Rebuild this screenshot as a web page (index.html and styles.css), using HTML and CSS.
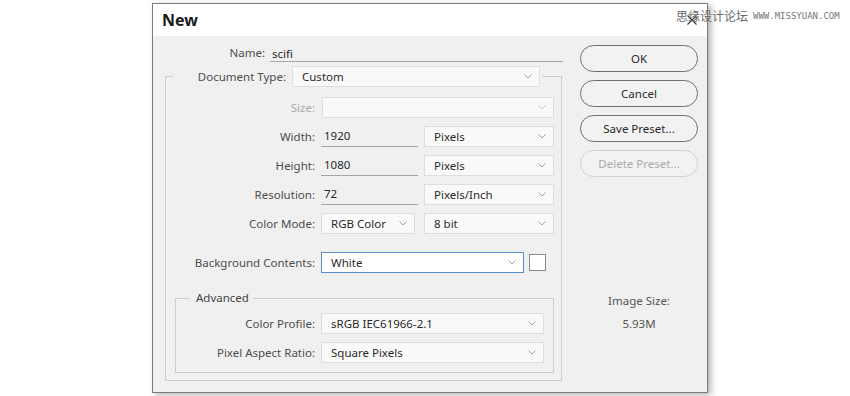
FILE: index.html
```html
<!DOCTYPE html>
<html lang="en">
  <head>
    <meta charset="UTF-8" />
    <meta name="viewport" content="width=device-width, initial-scale=1.0" />
    <title>New</title>
    <link rel="stylesheet" href="styles.css">
  </head>
  <body>
    <div class="page">
      <div class="dialog">
        <div class="titlebar">
          <span class="title">New</span>
          <svg class="close" width="10" height="10" viewBox="0 0 10 10">
            <path d="M0.5 0.5 L9.5 9.5 M9.5 0.5 L0.5 9.5" stroke="#333" stroke-width="1.1" fill="none" />
          </svg>
        </div>

        <div class="content">
          <div class="main">
            <div class="name-row">
              <span class="label name-label">Name:</span>
              <span class="name-input">scifi</span>
            </div>

            <fieldset class="group">
              <legend class="group-head">
                <span class="label doc-label">Document Type:</span>
                <div class="select doc-select">
                  <span>Custom</span>
                  <svg class="chev" width="8" height="5" viewBox="0 0 8 5"><polyline points="0.5,0.5 4,4 7.5,0.5" /></svg>
                </div>
              </legend>

              <div class="row">
                <span class="label disabled">Size:</span>
                <div class="select wide blank">
                  <span></span>
                  <svg class="chev" width="8" height="5" viewBox="0 0 8 5"><polyline points="0.5,0.5 4,4 7.5,0.5" /></svg>
                </div>
              </div>
              <div class="row">
                <span class="label">Width:</span>
                <span class="field">1920</span>
                <div class="select unit">
                  <span>Pixels</span>
                  <svg class="chev" width="8" height="5" viewBox="0 0 8 5"><polyline points="0.5,0.5 4,4 7.5,0.5" /></svg>
                </div>
              </div>
              <div class="row">
                <span class="label">Height:</span>
                <span class="field">1080</span>
                <div class="select unit">
                  <span>Pixels</span>
                  <svg class="chev" width="8" height="5" viewBox="0 0 8 5"><polyline points="0.5,0.5 4,4 7.5,0.5" /></svg>
                </div>
              </div>
              <div class="row">
                <span class="label">Resolution:</span>
                <span class="field">72</span>
                <div class="select unit">
                  <span>Pixels/Inch</span>
                  <svg class="chev" width="8" height="5" viewBox="0 0 8 5"><polyline points="0.5,0.5 4,4 7.5,0.5" /></svg>
                </div>
              </div>
              <div class="row">
                <span class="label">Color Mode:</span>
                <div class="select mode">
                  <span>RGB Color</span>
                  <svg class="chev" width="8" height="5" viewBox="0 0 8 5"><polyline points="0.5,0.5 4,4 7.5,0.5" /></svg>
                </div>
                <div class="select unit">
                  <span>8 bit</span>
                  <svg class="chev" width="8" height="5" viewBox="0 0 8 5"><polyline points="0.5,0.5 4,4 7.5,0.5" /></svg>
                </div>
              </div>

              <div class="row bg-row">
                <span class="label">Background Contents:</span>
                <div class="select bg-select">
                  <span>White</span>
                  <svg class="chev" width="8" height="5" viewBox="0 0 8 5"><polyline points="0.5,0.5 4,4 7.5,0.5" /></svg>
                </div>
                <span class="swatch"></span>
              </div>

              <fieldset class="advanced">
                <legend class="adv-head">Advanced</legend>
                <div class="row">
                  <span class="label adv-label">Color Profile:</span>
                  <div class="select profile">
                    <span>sRGB IEC61966-2.1</span>
                    <svg class="chev" width="8" height="5" viewBox="0 0 8 5"><polyline points="0.5,0.5 4,4 7.5,0.5" /></svg>
                  </div>
                </div>
                <div class="row">
                  <span class="label adv-label">Pixel Aspect Ratio:</span>
                  <div class="select profile">
                    <span>Square Pixels</span>
                    <svg class="chev" width="8" height="5" viewBox="0 0 8 5"><polyline points="0.5,0.5 4,4 7.5,0.5" /></svg>
                  </div>
                </div>
              </fieldset>
            </fieldset>
          </div>

          <div class="side">
            <div class="btn">OK</div>
            <div class="btn">Cancel</div>
            <div class="btn">Save Preset...</div>
            <div class="btn off">Delete Preset...</div>
            <div class="image-size">
              <div>Image Size:</div>
              <div class="size-value">5.93M</div>
            </div>
          </div>
        </div>
      </div>

      <div class="watermark">
        <span class="wm-cn">思缘设计论坛</span>
        <span class="wm-url">WWW.MISSYUAN.COM</span>
      </div>
    </div>
  </body>
</html>
```

FILE: styles.css
```css
body,
html {
  margin: 0;
  background-color: #fff;
  font-family: "Noto Sans", "Open Sans", sans-serif;
  font-size: 11.5px;
  color: #333;
}

.page {
  position: relative;
  height: 396px;
  box-sizing: border-box;
  padding: 3px 0 0 152px;
}

.dialog {
  width: 556px;
  height: 390px;
  box-sizing: border-box;
  border: 1px solid #7b7b7b;
  background-color: #f0f0f0;
  box-shadow: 3px 2px 6px rgba(0, 0, 0, 0.3);
  display: flex;
  flex-direction: column;
}

.titlebar {
  height: 32px;
  flex-shrink: 0;
  background-color: #fff;
  display: flex;
  align-items: center;
  justify-content: space-between;
  padding: 0 10px 0 9px;
}

.title {
  font-weight: bold;
  font-size: 16px;
  color: #1b1b1b;
}

.content {
  display: flex;
  padding: 8px 0 0 12px;
}

.main {
  width: 400px;
}

.label {
  line-height: 21px;
  text-align: right;
  color: #4d4d4d;
  white-space: nowrap;
}

.label.disabled {
  color: #ababab;
}

/* name */
.name-row {
  display: flex;
  align-items: flex-end;
  gap: 5px;
}

.name-label {
  width: 100px;
  line-height: 18px;
}

.name-input {
  width: 293px;
  height: 17px;
  line-height: 17px;
  padding-left: 2px;
  box-sizing: border-box;
  border-bottom: 1px solid #a5a5a5;
  color: #2a2a2a;
}

/* groups */
.group {
  margin: 4px 0 0;
  padding: 10px 0 7px;
  width: 397px;
  box-sizing: border-box;
  border: 1px solid #cdcdcd;
}

.group-head {
  margin-left: 7px;
  padding: 0 2px 0 20px;
  display: flex;
  align-items: center;
  gap: 6px;
}

.doc-label {
  width: 93px;
}

.advanced {
  margin: 16px 0 0 9px;
  padding: 6px 0 9px;
  width: 379px;
  box-sizing: border-box;
  border: 1px solid #cdcdcd;
}

.adv-head {
  margin-left: 14px;
  padding: 0 4px 0 6px;
  line-height: 18px;
  color: #444;
}

.row {
  display: flex;
  align-items: center;
  gap: 6px;
  height: 21px;
}

.row + .row {
  margin-top: 8px;
}

.row .label {
  width: 149px;
  flex-shrink: 0;
}

.row .adv-label {
  width: 139px;
}

.row.bg-row {
  margin-top: 18px;
}

/* controls */
.select {
  height: 21px;
  box-sizing: border-box;
  border: 1px solid #dedede;
  background-color: #f9f9f9;
  display: flex;
  align-items: center;
  justify-content: space-between;
  padding: 0 7px 0 9px;
  color: #2a2a2a;
  flex-shrink: 0;
}

.chev polyline {
  fill: none;
  stroke: #a0a0a0;
  stroke-width: 1;
}

.blank .chev polyline {
  stroke: #c8c8c8;
}

.doc-select {
  width: 248px;
}

.wide {
  width: 232px;
  margin-left: 1px;
}

.field {
  width: 97px;
  height: 21px;
  box-sizing: border-box;
  line-height: 20px;
  padding-left: 3px;
  border-bottom: 1px solid #a5a5a5;
  color: #2a2a2a;
}

.unit {
  width: 130px;
}

.mode {
  width: 94px;
  margin-right: 3px;
}

.bg-select {
  width: 203px;
  border-color: #5a8cc8;
  background-color: #fff;
}

.swatch {
  width: 17px;
  height: 17px;
  box-sizing: border-box;
  border: 1px solid #8a8a8a;
  background-color: #fff;
  margin-left: -1px;
}

.profile {
  width: 223px;
}

/* buttons */
.side {
  margin-left: 15px;
  width: 118px;
  padding-top: 1px;
  display: flex;
  flex-direction: column;
  gap: 8px;
}

.btn {
  height: 27px;
  box-sizing: border-box;
  border: 1px solid #6f6f6f;
  border-radius: 14px;
  background-color: #f2f2f2;
  display: flex;
  align-items: center;
  justify-content: center;
  color: #2a2a2a;
}

.btn.off {
  border-color: #d2d2d2;
  color: #aaa;
}

.image-size {
  margin-top: 108px;
  text-align: center;
  line-height: 16px;
  color: #555;
}

.size-value {
  margin-top: 7px;
}

/* watermark over the corner */
.watermark {
  position: absolute;
  left: 676px;
  top: 7px;
  display: flex;
  align-items: center;
  gap: 5px;
  white-space: nowrap;
}

.wm-cn {
  font-family: "Noto Sans CJK SC", sans-serif;
  font-size: 12px;
  color: #6a6a6a;
}

.wm-url {
  font-family: "DejaVu Sans Mono", monospace;
  font-size: 9px;
  color: #777;
}
```
